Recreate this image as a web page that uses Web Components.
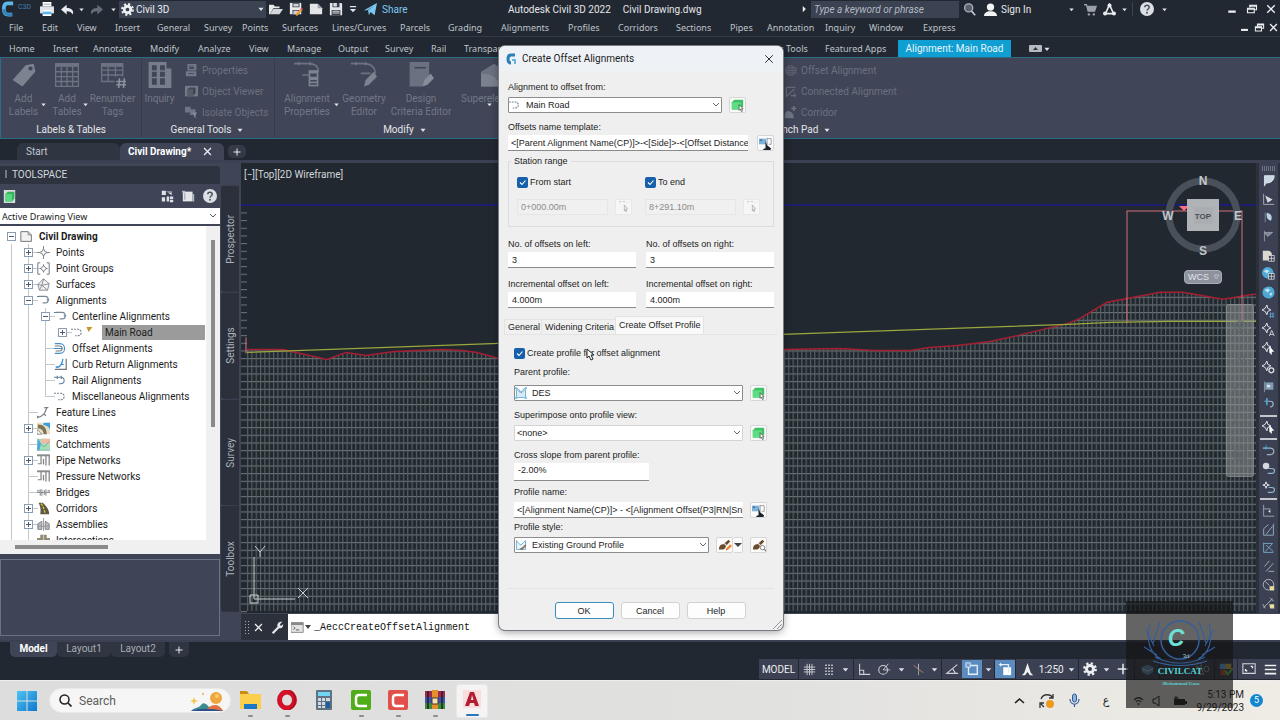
<!DOCTYPE html>
<html lang="en">
<head>
<meta charset="utf-8">
<meta name="viewport" content="width=device-width, initial-scale=1">
<title>Civil Drawing.dwg</title>
<style>
html, body { margin: 0; height: 100%; background: #212830; }
body { font-family: Roboto, "Noto Sans", sans-serif; font-size: 10px; overflow: hidden; }
</style>
</head>
<body>
<civil-app></civil-app>
<script>
/* 16x16 icon shapes, shared by every component */
const ICONS = {
  down: '<path d="M4 6h8l-4 5z" fill="#dfe2e8"/>',
  right: '<path d="M6 3v10l5-5z" fill="#eceef1"/>',
  printer: '<path d="M3 0h10v5H3z" fill="#fff"/><path d="M0 5h16v8H0z" fill="#dfe3e8"/><path d="M3 9h10v7H3z" fill="#fff"/><path d="M3 11h10v3H3z" fill="#5db4e8"/><path d="M4 2h8v1H4z" fill="#999"/>',
  undo: '<path d="M7 2v4c5 0 8 2 8 6l-1 2c-1-3-3-4-7-4v4L0 8z" fill="#e8ebef"/>',
  redo: '<path d="M9 2v4C4 6 1 8 1 12l1 2c1-3 3-4 7-4v4l7-6z" fill="#646b78"/>',
  gear: '<g fill="none" stroke="#edeff2"><circle cx="8" cy="8" r="4" stroke-width="3.4"/><circle cx="8" cy="8" r="6.6" stroke-width="2.6" stroke-dasharray="2.6 2.58"/></g>',
  folder: '<path d="M0 14V3h5l2 2h5v2H5l-4 7z" fill="#e6e8ea"/><path d="M5 8h11l-4 6H1z" fill="#d4d7db"/>',
  saveEdit: '<path d="M1 1h13v13H1z" fill="#e8eaed"/><path d="M4 1h8v5H4zM4 9h8v5H4z" fill="#3b404e"/><path d="M5 2h6v3H5zM5 10h6v4H5z" fill="#cfd3d8"/><path d="M7 14l6-6 2 2-6 6z" fill="#e9a03c"/><path d="M13 8l1-2 2 2-1 2z" fill="#d9534f"/>',
  doc: '<path d="M1 2h9l5 5v7H1z" fill="#e3e5e8"/><path d="M10 2v5h5z" fill="#9aa0aa"/>',
  save: '<path d="M1 1h13l1 1v13H1z" fill="#e3e5e8"/><path d="M4 1h8v5H4zM3 9h10v6H3z" fill="#3b404e"/><path d="M5 1h4v4H5zM4 10h8v1H4zM4 12h8v1H4z" fill="#d9dce0"/>',
  downBar: '<path d="M3 3h10v2H3zM3 8h10l-5 5z" fill="#dfe2e8"/>',
  plane: '<path d="M0 9L16 0l-3 15-5-4-2 4-1-6 8-6-9 6z" fill="#7cc8f2"/>',
  search: '<circle cx="7" cy="6" r="5" fill="#59606e" stroke="#aeb4be" stroke-width="1.6"/><path d="M10.500 10l4.500 5" stroke="#c5cad1" stroke-width="2"/>',
  user: '<circle cx="8" cy="5" r="4.500" fill="#f2f3f5"/><path d="M0 16c0-4 3-6 8-6s8 2 8 6z" fill="#f2f3f5"/>',
  cart: '<path d="M0 2h3l2 8h8l2-6H4" fill="#9aa0aa" stroke="#9aa0aa" stroke-width="1.500"/><circle cx="6" cy="14" r="1.500" fill="#9aa0aa"/><circle cx="12" cy="14" r="1.500" fill="#9aa0aa"/>',
  appA: '<path d="M8 2L3 13h10z" fill="none" stroke="#e9ebee" stroke-width="2"/><circle cx="8" cy="3" r="2.500" fill="#e9ebee"/><circle cx="2.500" cy="13" r="2.500" fill="#e9ebee"/><circle cx="13.500" cy="13" r="2.500" fill="#e9ebee"/>',
  help: '<circle cx="8" cy="8" r="8" fill="#dcdfe3"/><path d="M5.500 6c0-3 5-3 5 0 0 2-2.500 2-2.500 4" fill="none" stroke="#4a505e" stroke-width="1.700"/><circle cx="8" cy="12.300" r="1.100" fill="#4a505e"/>',
  min: '<path d="M3 10h10v3H3z" fill="#eef0f2"/>',
  restore: '<g fill="none" stroke="#eef0f2" stroke-width="1.500"><path d="M5 6V3h9v6h-3"/><path d="M2 7h9v6H2z"/><path d="M5 4h9M2 8h9" stroke-width="2"/></g>',
  close: '<path d="M3 3l10 10M13 3L3 13" stroke="#eef0f2" stroke-width="1.800"/>',
  thinClose: '<path d="M2 2l12 12M14 2L2 14" stroke="#222" stroke-width="1.500"/>',
  tag: '<path d="M1 11L9 2l5-1 1 5-8 9z" fill="#7c8290"/><circle cx="12" cy="4" r="1.300" fill="#404557"/>',
  table: '<g stroke="#6d7382" fill="none" stroke-width=".8"><path d="M1 1h14v14H1zM1 6h14M1 9h14M1 12h14M4.500 3v12M8 3v12M11.500 3v12"/><path d="M1 2h14" stroke-width="2"/></g>',
  renumber: '<g stroke="#6d7382" fill="none" stroke-width=".8"><path d="M9 12H1V1h13v8M1 5h13M1 8h13M5 3v9M9.500 3v6"/><path d="M1 2h13" stroke-width="2"/><path d="M12 10l-.5 6M15 10l-.5 6M10 12h6M10 14h6" stroke="#8a909c" stroke-width="1"/></g>',
  inquiry: '<path d="M1 0h11v4h3v12H1z" fill="#777d8b"/><g fill="#404557"><path d="M3 2h3v3H3zM8 2h3v3H8zM3 6h3v3H3zM8 6h3v3H8zM3 10h3v4H3zM8 10h3v4H8z"/></g>',
  props: '<path d="M3 0h11v8H3zM1 9h13v6H1z" fill="#727886"/><path d="M5 2h6v1H5zM5 4h6v2H5zM4 11h7v1H4z" fill="#404557"/>',
  viewer: '<path d="M0 1h16v13H0z" fill="#747a87"/><path d="M3 5l3-2h7v7l-3 3H3z" fill="#3f4453"/><path d="M3 5h7v8H3z" fill="#565c6a"/>',
  isolate: '<path d="M0 1h7v7H0zM6 4h7v7H6z" fill="#6f7584"/><path d="M9 8h6l-2 3v4l-2-2v-2z" fill="#858b97"/>',
  alProps: '<g fill="none" stroke="#6d7382"><path d="M0 1h9c4 0 6 2 6 5M5 8h4"/><path d="M3 0v2M10 0v2"/></g><path d="M9 5h6v10H9z" fill="#7d8391"/><path d="M10 7h4v2h-4zM10 11h4v1h-4zM10 13h4v1h-4z" fill="#404557"/>',
  geom: '<g fill="none" stroke="#6d7382"><path d="M0 1h8c5 0 7 3 7 6M6 7h6"/><path d="M3 0v2M9 0v2"/></g><path d="M8 15l1-4 5-5 2 3-5 5z" fill="#7d8391"/>',
  design: '<path d="M1 0h12v9l-4 6H1z" fill="#6b7180"/><path d="M4 3h7v1H4z" fill="#404557"/><path d="M9 15l1-4 4-4 2 3-4 4z" fill="#868c98"/>',
  superel: '<path d="M0 6l8-5 8 5v9H0z" fill="#6b7180"/><path d="M0 7c6 0 10 2 12 8H0z" fill="#7b818f"/>',
  mesh: '<g stroke="#636978" fill="none"><circle cx="8" cy="8" r="6"/><path d="M2 5h14M2 8h14M2 11h14M6 2v12M10 2v12"/></g>',
  conn: '<path d="M3 3h11M3 3v11l10-9M8 13h7M13 10v5" stroke="#636978" stroke-width="1.500" fill="none"/>',
  corr: '<path d="M1 15c0-6 1-9 4-9l3 1c3 1 4 4 4 8z" fill="#6d7382"/><path d="M9 3h6M12 0v6" stroke="#6d7382" stroke-width="2"/>',
  cube: '<path d="M1 0h14v16H1z" fill="#d9dcdb"/><path d="M3 5l3-3h8v8l-3 4H3z" fill="#33b35a"/><path d="M3 5h8v9H3z" fill="#57dc83"/>',
  pick: '<path d="M1 4l3-3h11v8l-3 4H1z" fill="#3fbf66"/><path d="M1 4h11v9H1z" fill="#5bdd82"/><path d="M10 7l5 5h-2l1 3-1 .5-1.500-3L10 14z" fill="#fff" stroke="#333" stroke-width=".8"/>',
  pickOff: '<path d="M3 2h2M7 2h3M12 3h1M4 1v2" stroke="#c2c2c2"/><path d="M9 6l4 5h-2l1 3-1 .5-1-3-1 2z" fill="#f2f2f2" stroke="#aaa" stroke-width=".9"/>',
  nameTpl: '<path d="M0 2h9v7H0z" fill="#7fb2d8"/><path d="M10 2h5v7h-3M10 1v9" fill="none" stroke="#8a9096"/><path d="M1 3h3v2H1z" fill="#4a78a0"/><path d="M8 5v9H6l-1 2h9l1-2-5-4z" fill="#1d232b"/>',
  tree: '<path d="M1 1h5v5H1zM1 9h4v5H1zM7 8h3v6H7z" fill="#dfe2e6"/><path d="M8 3h5v3M11 8h4v3h-4zM11 12h4v3h-4z" fill="#dfe2e6"/><path d="M7 2h6v4" stroke="#aab" fill="none"/>',
  panel: '<path d="M1 2h12v12H1z" fill="#e4e6e8"/><path d="M13 5h2v9h-2zM0 1h4v2H0z" fill="#b4b9c1"/><path d="M3 4h1v8H3z" fill="#8a8f99"/>',
  file: '<path d="M1 2h9l4 4v8H1z" fill="#f1f1f1" stroke="#777" stroke-width="1.200"/><path d="M10 2v4h4" fill="none" stroke="#777"/>',
  point: '<g fill="none" stroke="#7c828a" stroke-width="1.200"><path d="M8 0v16M0 8h16"/><path d="M8 3l1.500 3.500L13 8 9.500 9.500 8 13 6.500 9.500 3 8l3.500-1.500z" fill="#fff"/></g>',
  pgroup: '<g fill="none" stroke="#70767e" stroke-width="1.200"><path d="M4 1H1v14h3M12 1h3v14h-3"/><path d="M8 3v10M3 8h10"/><path d="M8 4l1.500 2.500L12 8 9.500 9.500 8 12 6.500 9.500 4 8l2.500-1.500z" fill="#fff"/></g>',
  surface: '<path d="M8 1l7 6-2 8H3L1 8zM8 1l-2 8-5-1M6 9l9-2M6 9l-3 6M6 9l7 6" fill="#f3f3f3" stroke="#82878e" stroke-width="1.100"/>',
  align: '<path d="M2 3h8c5 0 5 8 0 8H7" fill="none" stroke="#7c8590" stroke-width="1.500"/><path d="M0 3h3M12 7h3" stroke="#4f83a8" stroke-width="1.300"/>',
  alignDot: '<path d="M0 4h8c6 0 6 8 0 8H5" fill="none" stroke="#7c8590" stroke-width="1.500" stroke-dasharray="2.500 1.200"/>',
  offset: '<g fill="none" stroke-width="1.300"><path d="M1 2h6c8 0 8 12 0 12H1" stroke="#3f8fcb"/><path d="M1 5h6c4 0 4 6 0 6H2" stroke="#777"/><path d="M0 8h10" stroke="#3f8fcb"/></g>',
  curb: '<path d="M1 14h14V1" fill="none" stroke="#6d767f" stroke-width="1.500"/><path d="M3 12c5-1 7-4 8-11M2 11h4M8 8h4" fill="none" stroke="#2f8fd0" stroke-width="1.500"/>',
  rail: '<path d="M0 4h8c6 0 6 8 0 8H6M4 2v4M9 2v4" fill="none" stroke="#5d7f9c" stroke-width="1.300"/>',
  feature: '<path d="M0 14c7 0 10-4 12-12M9 2h5M1 12v3M9 10l2 2" fill="none" stroke="#777d84" stroke-width="1.500"/>',
  site: '<path d="M0 1h16v14H0z" fill="#e8dfc4"/><path d="M8 1h8v10c0-4-3-7-8-7z" fill="#3aa0da"/><path d="M1 3c7 0 11 4 11 12H8c0-5-3-7-7-7z" fill="#7d7455"/><path d="M0 9l6 6H0z" fill="#fff" stroke="#777"/>',
  catch: '<path d="M0 1h16v14H0z" fill="#a8e0b4"/><path d="M5 1h11v7l-6-2-5 2z" fill="#f2b9a5"/><path d="M1 0l4 7-2 8H0z" fill="#4aa9e0"/><path d="M0 15h16M5 8l4 3 6-7" stroke="#6aa" fill="none"/>',
  pipes: '<path d="M0 2h5v10H1M5 2h6v12M15 2v12M8 6v7M11 2h5" fill="none" stroke="#808283" stroke-width="1.500"/><path d="M0 1h16" stroke="#9a9c9e" stroke-width="1.500"/>',
  bridge: '<path d="M0 8h16M4 4v8M6 4v8M11 4v8M9 5v6M0 6h3M13 6h3" stroke="#8b8f93" stroke-width="1.300"/>',
  corridor: '<path d="M2 1h5c5 4 8 9 8 14H4C5 9 4 5 2 1z" fill="#5c5a45"/><path d="M5 2c3 4 4 8 5 12" stroke="#e9c931" stroke-width="1.600" stroke-dasharray="3 1.500" fill="none"/>',
  assembly: '<path d="M1 14V7l5-3v10zM10 4l5 3v7h-5z" fill="#b9bbbf" stroke="#77797d"/><path d="M8 0v16M1 10h14" stroke="#8a8c90"/>',
  inter: '<path d="M4 1h8v4h4v7H0V5h4z" fill="#8f8c78"/><path d="M8 1v14M0 9h16" stroke="#dcd7b5"/>',
  profile: '<path d="M2 2h2l4 5 4-5h2v12H2z" fill="#d5ecf8" stroke="#5ba8d2" stroke-width="1.100"/><path d="M0 0h3v3H0zM13 0h3v3h-3zM0 13h3v3H0zM13 13h3v3h-3z" fill="#8cc6e4"/><path d="M3 4l5 4 5-4" stroke="#777" fill="none" stroke-dasharray="2 1"/>',
  profEdit: '<path d="M2 2l3 4 3 2 6-6v12H2z" fill="#e7f4fb" stroke="#6aaed0" stroke-width="1.200"/><path d="M6 13l3 2 6-6-1-2-4 4z" fill="#8a6b4a"/>',
  brush: '<path d="M1 13c0-4 2-6 5-6l6-5 2 2-5 5c0 3-3 5-8 4z" fill="#6b4c2a"/><path d="M7 6l3 3" stroke="#ddd" stroke-width="1.500"/>',
  pencil: '<path d="M9 14l1-3 4-4 2 2-4 4z" fill="#ef8b2f"/><path d="M9 14l1-2 1 1z" fill="#d33"/>',
  lens: '<circle cx="12" cy="11" r="2.500" fill="#fff" stroke="#777"/><path d="M14 13l2 2" stroke="#777" stroke-width="1.500"/>',
  sgrid: '<path d="M5 1v14M8 1v14M11 1v14M1 5h14M1 8h14M1 11h14" stroke="#cfd3d9" stroke-width="1.100"/>',
  dots: '<path d="M3 3h11M3 7h11M3 11h11M3 15h11" stroke="#d8dbe0" stroke-width="2" stroke-dasharray="2 2"/>',
  ortho: '<path d="M2 1v13h13M2 9h5v5" fill="none" stroke="#ccd0d6" stroke-width="1.300"/>',
  polar: '<circle cx="7" cy="9" r="5" fill="none" stroke="#ccd0d6" stroke-width="1.200"/><path d="M7 9h8M7 9l6-7" stroke="#ccd0d6"/>',
  iso: '<path d="M8 1v14" stroke="#8ac08b"/><path d="M2 3l12 9" stroke="#c78484"/><path d="M8 1v6" stroke="#bbb"/>',
  angle: '<path d="M14 3L2 13h13M9 8l3 5" fill="none" stroke="#ccd0d6" stroke-width="1.300"/>',
  osnap: '<path d="M4 4h10v10H4z" fill="none" stroke="#e5eef7" stroke-width="1.500"/><path d="M1 1h5v5H1z" fill="#6f9fd0" stroke="#e5eef7"/>',
  lweight: '<path d="M6 6h9v9H6z" fill="#fff"/><path d="M3 3h9v9" fill="none" stroke="#e0eaf4" stroke-width="1.500"/><path d="M3 1v4M1 3h4" stroke="#fff"/>',
  annot: '<path d="M8 0l4 12 3 3-4 0-3-4-3 4H1l3-3z" fill="#f0f1f3"/>',
  plus: '<path d="M8 1v14M1 8h14" stroke="#e9ebee" stroke-width="2"/>',
  layers: '<path d="M8 2l7 3v6l-7 4-7-4V5z" fill="#5e8db4"/><path d="M1 7l7 3 7-3" stroke="#dbe7f0" fill="none"/>',
  shapes: '<path d="M1 1h5v5H1zM3 14l3-6 3 6z" fill="none" stroke="#aab0ba"/><circle cx="12" cy="8" r="3" fill="none" stroke="#aab0ba"/>',
  chip: '<path d="M1 2h7v6H1z" fill="#6ab0e0"/><path d="M8 2h6v6H8z" fill="#d6b53c"/><path d="M2 9h6v6H2z" fill="#c05030"/><path d="M7 10l3 4 6-7" stroke="#59c04a" stroke-width="2.500" fill="none"/>',
  screen: '<path d="M1 2h14v11H1z" fill="none" stroke="#d5d8dd" stroke-width="1.200"/><path d="M4 10v-2M4 10h2M12 5v2M12 5h-2" stroke="#fff" stroke-width="1.500"/>',
  menu: '<path d="M1 3h14M1 8h14M1 13h14" stroke="#f0f1f3" stroke-width="2"/>',
  wrench: '<path d="M1 14l7-7c-1-4 2-7 6-6l-3 3 1 2 3-2c0 4-2 5-5 5l-7 7z" fill="#e4e7ea"/>',
  term: '<path d="M0 2h15v12H0z" fill="#e4e4e4" stroke="#777"/><path d="M0 2h15v3H0z" fill="#8a8a8a"/><path d="M3 7l2 2-2 1.500M6 11h4" stroke="#444" fill="none"/>',
  /* toolbar rail */
  r1: '<path d="M3 15V2h12c0 6-4 9-9 9" fill="#c7d8e4" stroke="#e6eaee"/>',
  r2: '<path d="M2 1v13h13" stroke="#b6bcc6" fill="none"/><path d="M4 3l9 5-6 4z" fill="#d6dade"/>',
  r3: '<path d="M4 2v12" stroke="#8a91a0"/><path d="M6 2c6 1 7 6 5 10C6 11 5 6 6 2z" fill="#b8d4e4"/>',
  r4: '<path d="M3 1v13M3 3h10l-6 5z" fill="#7e8796" stroke="#9ba3b0"/>',
  r5: '<path d="M1 2h8l3 3v9H1z" fill="#dcdad0"/><path d="M8 8h7v7H8zM8 11.500h7M11.500 8v7" fill="#333a49" stroke="#d9dce0"/>',
  globe: '<circle cx="8" cy="8" r="7.500" fill="#4ea9d8"/><path d="M3 5l4-2 3 2-3 3zM9 9l4-1-2 5z" fill="#c8e4f0"/>',
  r6: '<circle cx="7" cy="7" r="7" fill="#4ea9d8"/><path d="M2 5l4-2 3 2-3 3z" fill="#c8e4f0"/><path d="M8 8h7v7H8zM8 11.500h7M11.500 8v7" fill="#333a49" stroke="#d9dce0"/>',
  star: '<path d="M6 0l1 4 4 2-4 2-1 4-2-4-4-2 4-2z" fill="#3b4253" stroke="#e2e5e9" stroke-width="1.200"/>',
  sx: '<path d="M9 11h6M9 14h6M10.500 9v7M13.500 9v7" stroke="#62a3d8"/>',
  sa: '<path d="M9 16l3-7 3 7M10 14h4" stroke="#e2e5e9" fill="none"/>',
  sc: '<path d="M9 5l6 7h-3v4l-3-3z" fill="#fff"/>',
  so: '<circle cx="11.500" cy="11.500" r="3" fill="none" stroke="#e2e5e9" stroke-width="1.500"/>',
  flag: '<path d="M3 2v13" stroke="#9aa2ae"/><path d="M4 3h10v9H4z" fill="#7f9db5"/><path d="M6 6h4v3H6z" fill="#dbe7ee"/>',
  pin: '<path d="M3 4h7c5 0 5 7 0 7" fill="none" stroke="#9fb0c0" stroke-width="1.500"/><path d="M6 0v9" stroke="#4aa8dc" stroke-width="2"/>',
  curve: '<path d="M1 5h9c6 0 6 8 0 8H6" fill="none" stroke="#9fb0c0" stroke-width="1.500"/><path d="M5 1v6M2 5h6" stroke="#4aa8dc"/>',
  curve2: '<circle cx="5" cy="5" r="4" fill="#d5d9dd"/><path d="M8 8h4c5 0 4 6 0 6H7" fill="none" stroke="#8fb2cc" stroke-width="1.500"/>',
  curve3: '<path d="M5 1l1 3 3 1-3 1-1 3-1-3-3-1 3-1z" stroke="#fff" fill="none"/><path d="M8 8h4c5 0 4 6 0 6H7" fill="none" stroke="#8fb2cc" stroke-width="1.500"/>',
  m1: '<path d="M2 1v14h13M2 6h8v5" fill="none" stroke="#a9b2bf"/><circle cx="9" cy="9" r="1" fill="#fff"/>',
  m2: '<path d="M2 7v8h12V1M2 7l6-5M5 14l8-10" fill="none" stroke="#9dbcd2"/>',
  m3: '<path d="M2 2v12h12M2 3h11L4 13M5 5l9 8" fill="none" stroke="#7fb4d4"/>',
  m4: '<path d="M3 8l6-7M5 14l9-10M8 14h7" fill="none" stroke="#b5bdc8"/>',
  m5: '<circle cx="8" cy="7" r="6.500" fill="none" stroke="#c6ccd3"/><path d="M4 3l5 5" stroke="#c6ccd3"/><path d="M9 9h6v5h-5z" fill="#e8dca0"/>',
  m6: '<path d="M2 13L13 2M1 9l3 5M10 1l4 4" stroke="#c6ccd3"/><path d="M9 9h6v5h-5z" fill="#e8dca0"/>'
};
const ic = (names, size = 12, extra = '') =>
  `<svg width="${size}" height="${size}" viewBox="0 0 16 16" aria-hidden="true" ${extra}>${names.split('+').map(n => ICONS[n]).join('')}</svg>`;

const BASE = `*{box-sizing:border-box} svg{display:block;flex:none}
button{font:inherit;color:inherit;background:none;border:0;padding:0;margin:0;display:flex;align-items:center;justify-content:center}
a{color:inherit;text-decoration:none}`;

function define(name, css, html) {
  const tpl = document.createElement('template');
  tpl.innerHTML = `<style>${BASE}${css}</style>${html}`;
  customElements.define(name, class extends HTMLElement {
    constructor() {
      super();
      this.attachShadow({ mode: 'open' }).append(tpl.content.cloneNode(true));
    }
  });
}

/* a toolbar cell: [width, icon, size, label] */
const cells = list => list.map(([w, n, s, label = n]) =>
  n ? `<button style="width:${w}px" aria-label="${label}">${ic(n, s)}</button>` : `<span style="width:${w}px"></span>`).join('');

define('title-bar', `
:host{display:flex;align-items:center;height:18px;background:#222831;color:#e4e6ea}
.left{display:flex;align-items:center;width:508px;height:18px}
.brand{display:flex;align-items:flex-start;gap:3px;width:38px;padding-left:2px;height:16px}
.brand small{font-size:7px;color:#3f7fb5;line-height:12px}
.ws{position:relative;display:flex;align-items:center;width:147px;height:17px;background:#3b4252;padding-left:2px}
.ws select{appearance:none;border:0;background:none;color:#eceef1;font:10px Roboto,sans-serif;width:130px;padding:0 0 0 2px;outline:0}
.share{color:#7cc8f2;padding-left:2px}
.titles{display:flex;gap:12px;flex:1}
input{width:148px;height:17px;border:0;background:#3b4252;font:italic 10px Roboto,sans-serif;padding:0 0 0 3px}
input::placeholder{color:#b4b9c3}
.user{width:60px;display:flex}
.bar{width:1px;height:14px;background:#3b4252}`,
`<div class="left"><div class="brand"><svg width="13" height="16" viewBox="0 0 14 16"><path d="M12 2H6C3 2 2 4 2 8s1 6 5 6h4" fill="none" stroke="#5db5ea" stroke-width="4"/><path d="M2 8c0 4 1 6 5 6h4" fill="none" stroke="#3183bd" stroke-width="3"/></svg><small>C3D</small></div>
${cells([[18,'printer',14],[22,'undo',13],[6,'down',9],[24,'redo',13],[11,'down',9]])}
<div class="ws">${ic('gear',13)}<select aria-label="Workspace"><option>Civil 3D</option></select>${ic('down',10)}</div>
${cells([[20,'folder',14],[20,'saveEdit',14],[20,'doc',14],[20,'save',14],[14,'downBar',10],[20,'plane',13]])}<a class="share" href="#">Share</a></div>
<div class="titles"><span>Autodesk Civil 3D 2022</span><span>Civil Drawing.dwg</span></div>
${cells([[14,'right',10]])}<input aria-label="Search help" placeholder="Type a keyword or phrase">
${cells([[20,'search',13],[22,'user',13]])}<a class="user" href="#">Sign In</a>
${cells([[20,'down',9],[18,'cart',13],[20,'appA',13],[10,'down',9],[3,'']])}<i class="bar"></i>${cells([[28,'help',14],[6,'down',9],[54,''],[21,'min',12],[20,'restore',12],[18,'close',12]])}`);

define('menu-bar', `
:host{display:flex;align-items:center;justify-content:space-between;height:19px;background:#222831;border-bottom:1px solid #333a45;color:#bfc3ca;font-family:"Noto Sans",sans-serif;font-size:9px;padding-left:9px}
nav{display:grid;grid-template-columns:33px 35px 38px 42px 47px 38px 40px 50px 68px 48px 53px 67px 50px 58px 54px 37px 58px 44px 54px 40px;line-height:19px}
.win{display:flex}`,
`<nav>${'File,Edit,View,Insert,General,Survey,Points,Surfaces,Lines/Curves,Parcels,Grading,Alignments,Profiles,Corridors,Sections,Pipes,Annotation,Inquiry,Window,Express'.split(',').map(t => `<a href="#">${t}</a>`).join('')}</nav>
<div class="win">${cells([[15,'min',11],[15,'restore',11],[13,'close',11]])}</div>`);

define('ribbon-tabs', `
:host{display:flex;align-items:flex-end;height:20px;background:#222831;color:#bfc3ca;font-family:"Noto Sans",sans-serif;font-size:9px;padding-left:9px}
nav{display:grid;grid-template-columns:44px 40px 57px 48px 51px 38px 51px 47px 46px 33px 68px 64px 67px 39px 49px 74px 73px;line-height:17px}
nav a{white-space:nowrap}
.on{background:#109fd2;color:#e8f6fc;line-height:17px;width:113px;text-align:center;font-family:Roboto,sans-serif;font-size:10px}
.state{display:flex;align-items:center;height:17px;padding-left:18px}
.state i{width:13px;height:7px;background:#b4b8c0;border-radius:1px;display:flex;align-items:center;justify-content:center}`,
`<nav>${'Home,Insert,Annotate,Modify,Analyze,View,Manage,Output,Survey,Rail,Transparent,InfraWorks,Collaborate,Help,Add-ins,Express Tools,Featured Apps'.split(',').map(t => `<a href="#">${t}</a>`).join('')}</nav>
<a class="on" href="#">Alignment: Main Road</a><div class="state"><i><svg width="5" height="3" viewBox="0 0 5 3"><path d="M0 3h5L2.500 0z" fill="#333"/></svg></i>${ic('down',10)}</div>`);

define('ribbon-panel', `
:host{display:flex;flex-direction:column;border-right:1px solid #363b49}
.body{flex:1;display:flex;min-width:0}
footer{height:15px;line-height:14px;display:flex;justify-content:center;color:#e4e6ea;white-space:nowrap}
:host([start]) footer{justify-content:flex-start}
:host([plain]){border-right:0}`,
`<div class="body"><slot></slot></div><footer><slot name="title"></slot></footer>`);

define('ribbon-tool', `
:host{display:block;position:relative;color:#727888;text-align:center;line-height:13px;padding-top:4px}
button{display:flex;flex-direction:column;width:100%;gap:4px;line-height:13px}
.arrow{position:absolute;right:-2px;top:42px}
:host([mid]) .arrow{right:50%}`,
`<button><slot name="icon"></slot><span><slot></slot></span></button><span class="arrow"><slot name="arrow"></slot></span>`);

define('ribbon-list', `
:host{display:grid;grid-auto-rows:21px;align-content:start;color:#6b7180;padding:2px 0 0 8px}
::slotted(a){display:flex;align-items:center;gap:4px;color:inherit;text-decoration:none}`, `<slot></slot>`);

const tool = (w, icon, a, b, arrow) => `<ribbon-tool ${arrow === 'mid' ? 'mid' : ''} style="width:${w}px">${ic(icon, 26, 'slot="icon"')}${a}<br>${b || '&nbsp;'}${arrow ? ic('down', 9, 'slot="arrow"') : ''}</ribbon-tool>`;
const row = (icon, t) => `<a href="#">${ic(icon, 13)}<span>${t}</span></a>`;
define('app-ribbon', `
:host{display:grid;grid-template-columns:141px 133px 262px 229px 1fr;height:82px;background:#404557;border:1px solid #2c6a86;border-right:0}
a{display:flex;align-items:center;gap:4px;white-space:nowrap}
.sub svg{display:inline;vertical-align:middle;margin-left:4px}
.f{padding-left:18px}`,
`<ribbon-panel>${tool(45,'tag','Add','Labels',1)}${tool(42,'table','Add','Tables',1)}${tool(49,'renumber','Renumber','Tags')}<span slot="title">Labels &amp; Tables</span></ribbon-panel>
<ribbon-panel>${tool(35,'inquiry','Inquiry','')}<ribbon-list>${row('props','Properties')}${row('viewer','Object Viewer')}${row('isolate','Isolate Objects')}</ribbon-list><span slot="title" class="sub">General Tools${ic('down',10)}</span></ribbon-panel>
<ribbon-panel>${tool(64,'alProps','Alignment','Properties',1)}${tool(50,'geom','Geometry','Editor')}${tool(64,'design','Design','Criteria Editor')}${tool(82,'superel','Superelevation','','mid')}<span slot="title" class="sub">Modify${ic('down',10)}</span></ribbon-panel>
<ribbon-panel></ribbon-panel>
<ribbon-panel plain start><ribbon-list class="f">${row('mesh','Offset Alignment')}${row('conn','Connected Alignment')}${row('corr','Corridor')}</ribbon-list><span slot="title" class="sub">Launch Pad${ic('down',10)}</span></ribbon-panel>`);

define('doc-tabs', `
:host{display:flex;align-items:flex-end;height:24px;background:#222831;border-bottom:3px solid #3b4152;padding-left:17px;color:#c3c7ce}
a{display:flex;align-items:center;height:17px;background:#2f3541;border-radius:6px 6px 0 0;width:103px;padding-left:9px}
.on{background:#3f4556;color:#fff;font-weight:bold;width:104px;padding-left:8px;gap:11px}
button{background:#343a47;height:13px;width:18px;border-radius:5px;margin:0 0 2px 4px}`,
`<a href="#">Start</a><a class="on" href="#">Civil Drawing*${ic('close',11)}</a><button aria-label="New tab">${ic('plus',8)}</button>`);

/* [level, expander, icon, label] */
const TREE = [[0,'-','file','Civil Drawing'],[1,'+','point','Points'],[1,'+','pgroup','Point Groups'],[1,'+','surface','Surfaces'],[1,'-','align','Alignments'],
[2,'-','align','Centerline Alignments'],[3,'+','alignDot','Main Road'],[2,'','offset','Offset Alignments'],[2,'','curb','Curb Return Alignments'],[2,'','rail','Rail Alignments'],
[2,'','alignDot','Miscellaneous Alignments'],[1,'','feature','Feature Lines'],[1,'+','site','Sites'],[1,'','catch','Catchments'],[1,'+','pipes','Pipe Networks'],[1,'','pipes','Pressure Networks'],
[1,'','bridge','Bridges'],[1,'+','corridor','Corridors'],[1,'+','assembly','Assemblies'],[1,'','inter','Intersections']];
const treeRow = ([lv, ex, icon, label]) => {
  const guides = [];
  for (let k = lv ? 0 : 1; k <= Math.min(lv, 2); k++) guides.push(`linear-gradient(#c4c6c9,#c4c6c9) ${11 + 17 * k}px 0/1px ${label[0] === 'M' && lv === 2 && k === 2 ? '8px' : '16px'} no-repeat`);
  if (lv) guides.push(`linear-gradient(#c4c6c9,#c4c6c9) ${11 + 17 * lv}px 8px/10px 1px no-repeat`);
  return `<li class="l${lv}" style="padding-left:${7 + 17 * lv}px;background:${guides.join(',') || 'none'}">
<i class="ex ${ex ? 'box' : ''}">${ex ? `<svg width="7" height="7" viewBox="0 0 7 7"><path d="M1 3.500h5${ex === '+' ? 'M3.500 1v5' : ''}" stroke="#4c5a78"/></svg>` : ''}</i>${ic(icon, 13)}${lv === 3 ? '<svg width="13" height="10" viewBox="0 0 12 10"><path d="M2 0h6L4 5z" fill="#c8952c"/></svg>' : ''}<span>${label}</span></li>`;
};
define('tree-view', `
:host{display:grid;grid-template-columns:1fr 14px;grid-template-rows:1fr 14px;background:#fff;min-height:0;overflow:hidden}
ul{list-style:none;margin:0;padding:2px 0 0;min-height:0;overflow:hidden;color:#1c1c1c}
li{display:flex;align-items:center;height:16px;white-space:nowrap}
.ex{width:9px;height:9px;margin-right:4px;flex:none}
.box{border:1px solid #8b9bb0;background:#fff;display:block}
li span{padding-left:6px}
.l2 span{padding-left:5px}
.l0 span{font-weight:bold}
.l3 span{background:#9b9b9b;width:103px;line-height:15px;padding-left:3px;margin-left:5px}
.v{background:#f0f0f0;padding:14px 5px 0 5px}
.v i{display:block;height:187px;background:#8a8a8a}
.h{grid-column:1/3;background:#f0f0f0;padding:5px 0 5px 15px}
.h i{display:block;height:4px;width:93px;background:#8a8a8a}`,
`<ul>${TREE.map(treeRow).join('')}</ul><div class="v"><i></i></div><div class="h"><i></i></div>`);

define('tool-space', `
:host{display:flex;flex-direction:column;width:221px;background:#3f4556;min-height:0;padding:3px 1px 4px 0}
header{height:18px;background:#2d333f;color:#d5d8dd;display:flex;align-items:center;gap:5px;padding:0 0 2px 5px;border-radius:0 3px 0 0}
header i{width:2px;height:8px;background:#70788a}
.bar{display:flex;align-items:center;justify-content:space-between;height:24px;padding:0 0 0 3px}
.bar div{display:flex}
.sel{position:relative}
select{display:block;appearance:none;width:100%;height:16px;border:0;border-radius:0;background:#fff;color:#1a1a1a;font:9px "Noto Sans",sans-serif;padding:0 0 0 2px;outline:0}
.sel svg{position:absolute;right:3px;top:4px}
tree-view{flex:1;margin-top:2px}
.log{height:77px;margin-top:5px;border:1px solid #6a7285}`,
`<header><i></i>TOOLSPACE</header><div class="bar">${ic('cube',13)}<div>${cells([[21,'tree',13],[21,'panel',13],[21,'help',14]])}</div></div>
<div class="sel"><select aria-label="View"><option>Active Drawing View</option></select><svg width="8" height="8" viewBox="0 0 8 8"><path d="M1 2l3 3 3-3" fill="none" stroke="#555"/></svg></div>
<tree-view></tree-view><div class="log"></div>`);

define('side-tabs', `
:host{display:grid;grid-template-rows:repeat(4,1fr);width:20px;background:#3f4556;padding:22px 2px 28px 0;color:#aeb3bd}
a{writing-mode:vertical-rl;transform:rotate(180deg);display:flex;align-items:center;justify-content:center;background:#2b303b;border-radius:0 3px 3px 0;border-bottom:1px solid #3f4556}
a:first-child{background:#3f4556;color:#dfe1e5;border:1px solid #343a48;border-right:0}`,
`<a href="#">Prospector</a><a href="#">Settings</a><a href="#">Survey</a><a href="#">Toolbox</a>`);

const ground = '6,186 42,186 64,191 86,196 105,189 125,192 153,188 200,186 222,187 236,189 258,195 400,190 541,186 599,185 633,187 669,187 688,184 716,182 749,178 777,172 827,160 839,155 866,139 919,129 942,129 982,136 1012,131 1015,131';
define('drawing-view', `
:host{display:block;position:relative;background:#212830;min-width:0;overflow:hidden}
.plan{position:absolute;inset:0;width:100%;height:100%}
.view{position:absolute;left:3px;top:5px;color:#d4d7db;line-height:14px}
.ucs{position:absolute;left:7px;bottom:2px}
.cube{position:absolute;right:11px;top:8px;width:84px;height:88px}
.wcs{position:absolute;right:34px;top:107px;width:38px;height:14px;border-radius:4px;background:#8d929d;border:1px solid #a9adb6;color:#e3e5e9;font:9px/12px "Liberation Sans",sans-serif;justify-content:flex-start;padding-left:3px;gap:4px}
.nav{position:absolute;right:2px;top:141px;width:28px;height:173px;background:rgba(150,154,154,.5);border:1px solid rgba(150,154,154,.5);border-radius:3px;display:flex;flex-direction:column;align-items:center;justify-content:space-around;padding:6px 0}`,
`<svg class="plan" viewBox="0 0 1015 449" preserveAspectRatio="none">
<defs><pattern id="v" width="4.330" height="7.650" patternUnits="userSpaceOnUse" x="6" y="187"><path d="M0 .5h4.330" stroke="#6c7677" stroke-width="1.200"/><path d="M.5 0v7.650" stroke="#566062" stroke-width="1.300"/></pattern>
<pattern id="t" width="8" height="7.650" patternUnits="userSpaceOnUse" y="187"><path d="M0 .5h6" stroke="#667071" stroke-width="1.200"/></pattern></defs>
<path d="M0 42h1015" stroke="#1a1a86" stroke-width="1.500"/><rect x="0" y="47" width="6" height="402" fill="url(#t)"/>
<polygon points="${ground} 1015,447 6,447" fill="url(#v)"/><path d="M5 174v16" stroke="#e8707c"/>
<polyline points="${ground}" fill="none" stroke="#a51f33" stroke-width="1.500"/>
<polyline points="6,189 258,180 541,171 827,161 870,159 930,158 1015,158" fill="none" stroke="#9aa83c" stroke-width="1.300"/>
<path d="M886 160V48h115v110" fill="none" stroke="#d5717c"/><path d="M938 43h10l-5 5z" fill="#ff6f7f"/></svg>
<div class="view">[−][Top][2D Wireframe]</div>
<svg class="ucs" width="64" height="66" viewBox="0 0 64 66"><g fill="none" stroke="#c9cdd1"><path d="M6 54V12M6 54h41"/><path d="M2 50h8v8H2z"/><path d="M7 1l5 6 5-6M12 7v5M50 43l10 10M60 43L50 53"/></g></svg>
<svg class="cube" viewBox="0 0 84 88" font-family="Liberation Sans, sans-serif" font-weight="bold" text-anchor="middle"><circle cx="42" cy="44" r="34" fill="none" stroke="#4a505a" stroke-width="7"/><rect x="26" y="28" width="32" height="32" fill="#b8bbbe" opacity=".95"/><rect x="33" y="36" width="19" height="17" fill="#aaadb1"/><text x="42" y="48" font-size="8" fill="#4a4f57">TOP</text><g fill="#c3c6ca" font-size="12"><text x="42" y="14">N</text><text x="7" y="49">W</text><text x="77" y="49">E</text><text x="42" y="84">S</text></g></svg>
<button class="wcs">WCS<svg width="7" height="6" viewBox="0 0 7 6"><path d="M1 1h5L3.500 5z" fill="none" stroke="#b9bdc5"/></svg></button>
<div class="nav">${['<circle cx="8" cy="8" r="6"/><circle cx="8" cy="8" r="2"/>','<path d="M4 14V6l4 3V3l4 4v7z"/>','<circle cx="7" cy="7" r="5"/><path d="M11 11l4 4"/>','<path d="M1 8h14M4 4L1 8l3 4M12 4l3 4-3 4"/>','<path d="M2 3h12v9H2zM5 14h6M6 6l4 2-4 2z"/>'].map(p => `<svg width="15" height="15" viewBox="0 0 16 16" fill="none" stroke="#5d6467">${p}</svg>`).join('')}</div>`);

define('icon-rail', `
:host{display:flex;flex-direction:column;width:24px;background:#3b4152;border-left:3px solid #2b303b;border-right:2px solid #2b303b;padding-top:3px;min-height:0}
.grip{height:5px;margin:0 3px;background:repeating-linear-gradient(90deg,#6d7484 0 1px,transparent 1px 2px)}
button{flex:1;min-height:0}
hr{width:17px;height:2px;margin:1px auto;border:0;background:#c3c7cd}`,
`<div class="grip"></div>${['r1','r2','r3','r4','r5','r6','globe','star+sx','star+sa','star+sc','star+so','flag','pin','-','star+sc','-','curve','curve2','curve3','-','m1','m2','m3','m4','m5','m6'].map(n => n === '-' ? '<hr>' : `<button aria-label="${n}">${ic(n, 13)}</button>`).join('')}`);

define('command-line', `
:host{display:flex;align-items:center;height:27px;background:#2b303b;border-top:1px solid #3f4556}
.grip{width:6px;height:15px;margin:0 0 0 3px;background:radial-gradient(#aab 40%,transparent 45%) 0 0/3px 3px}
.box{flex:1;display:flex;align-items:center;height:26px;background:#fff;padding-left:3px}
input{flex:1;height:24px;border:0;outline:0;font:10px/22px "Liberation Mono","DejaVu Sans Mono",monospace;color:#111;padding:0 0 0 2px;background:none}`,
`<i class="grip"></i>${cells([[16,'close',11],[22,'wrench',13]])}<div class="box">${ic('term',13)}<svg width="8" height="8" viewBox="0 0 8 8"><path d="M1 2h6L4 6z" fill="#444"/></svg><input aria-label="Command" value="_AeccCreateOffsetAlignment"></div>`);

define('layout-tabs', `
:host{display:flex;height:19px;background:#222831;border-top:2px solid #3b4152;padding-left:10px;color:#a9adb6}
a{height:15px;line-height:14px;background:#2f3541;border-radius:0 0 5px 5px;width:54px;text-align:center}
.on{background:#3f4556;color:#fff;font-weight:bold;width:47px}
button{background:#2f3541;height:15px;width:20px;margin-left:4px;border-radius:0 0 5px 5px}`,
`<a class="on" href="#">Model</a><a href="#">Layout1</a><a href="#">Layout2</a><button aria-label="New layout">${ic('plus',8)}</button>`);

define('status-bar', `
:host{display:flex;justify-content:flex-end;height:21px;background:#222831;padding-bottom:1px;color:#eceef1}
div{display:flex;background:#3b4152;margin-left:1px}
button{height:20px}
.hl button{background:#5b8cc0;margin:1px 0 0;height:18px}`,
`<div><button style="width:39px">MODEL</button></div><div>${cells([[20,'sgrid',13],[19,'dots',12],[15,'down',11]])}</div>
<div>${cells([[20,'ortho',13],[19,'polar',14],[16,'down',11],[18,'iso',13],[14,'down',11]])}</div><div>${cells([[20,'angle',14]])}<span class="hl">${cells([[20,'osnap',14]])}</span>${cells([[12,'down',11]])}</div>
<div class="hl">${cells([[20,'lweight',14]])}</div><div>${cells([[22,'annot',13]])}<button style="width:40px">1:250&nbsp;${ic('down',11)}</button></div>
<div>${cells([[21,'gear',14],[12,'down',11]])}${cells([[22,'plus',12]])}</div><div>${cells([[24,'layers',13]])}</div><div>${cells([[32,''],[22,'shapes',14]])}</div><div>${cells([[22,'chip',14]])}</div><div>${cells([[22,'screen',14],[20,'menu',13]])}</div>`);

define('task-app', `
:host{display:flex;flex-direction:column;align-items:center;justify-content:flex-end;width:32px;height:34px;margin-right:5px;gap:3px;padding-bottom:1px;border-radius:3px}
:host([active]){background:#f5f3f3;border:1px solid #ebe8e8}
i{width:5px;height:2px;border-radius:1px;background:#8d8d8d}
:host([active]) i{width:13px;background:#2678b8}
:host([idle]) i{background:none}
button{height:24px}`, `<button><slot></slot></button><i></i>`);

define('task-bar', `
:host{display:flex;align-items:center;height:40px;background:linear-gradient(90deg,#dddddd,#e1e1e0 60%,#efece5);border-top:1px solid #eee;color:#1f1f1f}
.start{margin-left:17px}
.search{display:flex;align-items:center;width:182px;height:25px;margin:0 3px 0 12px;border-radius:13px;background:#f6f6f6;padding:0 6px 0 9px;border:1px solid #e9e9e9}
.search input{border:0;background:none;outline:0;font:12px Roboto,sans-serif;width:0;flex:1;padding:0 0 0 7px}
.search input::placeholder{color:#5c5c5c}
.sp{flex:1}
.ar{width:22px;text-align:center;font:11px "DejaVu Sans",sans-serif;margin-right:9px}
.clock{text-align:right;line-height:13px;width:54px}
.badge{width:13px;height:13px;border-radius:7px;background:#1287cf;color:#fff;font-size:9px;line-height:13px;text-align:center;margin:0 17px 0 6px}`,
`<button class="start" aria-label="Start"><svg width="20" height="20" viewBox="0 0 20 20"><defs><linearGradient id="w" x2="1" y2="1"><stop stop-color="#4cc4f0"/><stop offset="1" stop-color="#0f77cf"/></linearGradient></defs><path d="M0 0h9.500v9.500H0zM10.500 0H20v9.500h-9.500zM0 10.500h9.500V20H0zM10.500 10.500H20V20h-9.500z" fill="url(#w)"/></svg></button>
<label class="search"><svg width="13" height="13" viewBox="0 0 13 13"><circle cx="5.500" cy="5.500" r="4.500" fill="none" stroke="#222" stroke-width="1.500"/><path d="M9 9l3.500 3.500" stroke="#222" stroke-width="1.700"/></svg><input aria-label="Search" placeholder="Search">
<svg width="34" height="22" viewBox="0 0 34 22"><circle cx="26" cy="8" r="6" fill="#f0a63e"/><circle cx="27" cy="6" r="2" fill="#f9cd6c"/><path d="M4 7l1 3 3 1-3 1-1 3-1-3-3-1 3-1z" fill="#f5c341"/><circle cx="13" cy="4" r="1" fill="#f0a63e"/><path d="M1 21c4-4 8-3 10-6 3-4 6 0 8 2 4 0 9-3 14 4z" fill="#3c8c94"/><path d="M17 19c5-5 12-6 16 2z" fill="#e2723f"/><path d="M1 21c8-3 20-3 32 0z" fill="#2f4f88"/></svg></label>
<task-app aria-label="Files"><svg width="21" height="20" viewBox="0 0 21 20"><path d="M0 1h7l2 3H0z" fill="#c98d14"/><path d="M0 4h21v15H0z" fill="#fbcf4c"/><path d="M4 19v-5h13v5z" fill="#1b78c7"/></svg></task-app>
<task-app><svg width="20" height="20" viewBox="0 0 20 20"><ellipse cx="10" cy="10" rx="7.500" ry="8" fill="none" stroke="#d3122a" stroke-width="5"/><path d="M13 1c7 4 7 14 0 18" stroke="#a70e25" stroke-width="1.500" fill="none"/></svg></task-app>
<task-app idle><svg width="16" height="20" viewBox="0 0 16 20"><rect width="16" height="20" rx="1" fill="#5f7182"/><path d="M2 2h12v4H2z" fill="#6fd7f4"/><path d="M2 8h3v3H2zM6 8h3v3H6zM10 8h4v3h-4zM2 12h3v3H2zM6 12h3v3H6zM2 16h3v2H2zM6 16h3v2H6z" fill="#cfd8e0"/><path d="M10 12h4v6h-4z" fill="#1f5e98"/></svg></task-app>
<task-app><svg width="20" height="20" viewBox="0 0 20 20"><rect width="20" height="20" rx="2" fill="#4fae17"/><path d="M16 5H8Q5 5 5 8v5q0 3 3 3h8" fill="none" stroke="#fff" stroke-width="2.500"/></svg></task-app>
<task-app><svg width="20" height="20" viewBox="0 0 20 20"><rect width="20" height="20" rx="2" fill="#e2504b"/><path d="M16 5H8Q5 5 5 8v5q0 3 3 3h8" fill="none" stroke="#fff" stroke-width="2.500"/></svg></task-app>
<task-app><svg width="20" height="20" viewBox="0 0 20 20"><path d="M0 1h20v6H0z" fill="#a3264f"/><path d="M0 7h20v6H0z" fill="#3b53a8"/><path d="M0 13h20v6H0z" fill="#3f8b3c"/><path d="M3 1v18M17 1v18" stroke="#222" stroke-width="1.500"/><path d="M7 0h6v19H7z" fill="#e2902c"/><path d="M7 8h6v6H7z" fill="#f4e2b2" stroke="#533"/></svg></task-app>
<task-app active><svg width="18" height="20" viewBox="0 0 18 20"><path d="M0 1h18v18H0z" fill="#f8dedd"/><path d="M2 17L7 3h4l5 14h-4l-1-3H7l-1 3zM8 11h2.500L9 6z" fill="#b11e31" fill-rule="evenodd"/></svg></task-app>
<span class="sp"></span>
<svg width="11" height="8" viewBox="0 0 11 8"><path d="M1 6l4.500-4L10 6" fill="none" stroke="#222" stroke-width="1.600"/></svg>
<svg style="margin:0 0 0 14px" width="16" height="16" viewBox="0 0 16 16"><path d="M2 6c2-6 10-5 12-1M14 1v4h-4M1 15v-5h4M2 11l3 3" fill="none" stroke="#333" stroke-width="1.300"/><circle cx="11" cy="11" r="4" fill="#ee9a1f"/></svg>
<svg style="margin:0 15px 0 14px" width="11" height="15" viewBox="0 0 11 15"><rect x="3.500" y="1" width="4" height="8" rx="2" fill="#8fb3dd" stroke="#2f5b9c"/><path d="M1 6c0 7 9 7 9 0M5.500 11v3" fill="none" stroke="#2f5b9c" stroke-width="1.200"/></svg>
<span class="ar">ع</span>
<svg style="margin:0 8px 0 7px" width="11" height="9" viewBox="0 0 11 9"><path d="M1 4c3-3 6-3 9 0M3 6c2-2 3-2 5 0" fill="none" stroke="#333" stroke-width="1.200"/><circle cx="5.500" cy="8" r="1" fill="#333"/></svg>
<svg width="10" height="10" viewBox="0 0 10 10"><path d="M1 3h2l4-3v10L3 7H1z" fill="none" stroke="#222"/></svg>
<svg style="margin:0 3px 0 11px" width="14" height="10" viewBox="0 0 14 10"><path d="M1 3h11v6H1zM12 5h2v3h-2z" fill="#222"/><path d="M3 0v4M1 2h5" stroke="#222"/></svg>
<div class="clock"><div>5:13 PM</div><div>9/29/2023</div></div><div class="badge">5</div>`);

/* ---- dialog ---- */
define('field-box', `
:host{display:block;--gap:4px}
:host([tight]){--gap:2px}
:host([loose]){--gap:7px}
.lab{height:12px;line-height:12px;margin-bottom:var(--gap);white-space:nowrap}
.row{display:flex;align-items:center}`,
`<div class="lab"><slot name="label"></slot></div><div class="row"><slot></slot></div>`);

const chev = '<svg class="c" width="8" height="8" viewBox="0 0 8 8"><path d="M1 2l3 3 3-3" fill="none" stroke="#666"/></svg>';
const check = (text) => `<label class="ck"><span class="tick"><input type="checkbox" checked><svg width="11" height="11" viewBox="0 0 11 11"><path d="M3 5.500l2 2 3.500-4" fill="none" stroke="#fff" stroke-width="1.100"/></svg></span>${text}</label>`;
define('offset-dialog', `
:host{position:absolute;left:calc(50% - 141px);top:46px;width:284px;background:#efefef;border-radius:6px;box-shadow:0 0 0 1px #777c84,0 2px 8px rgba(0,0,0,.4);color:#1c1c1c;font-family:"Liberation Sans",sans-serif;font-size:9px;padding-bottom:11px}
header{display:flex;align-items:center;height:25px;background:#eef2f6;border-radius:6px 6px 0 0;padding:0 9px 0 7px;font:10px Roboto,sans-serif}
header span{flex:1;padding-left:4px}
main{padding:10px 9px 0;display:flex;flex-direction:column}
label{display:block}
input,select{font:inherit;color:#1c1c1c;margin:0;outline:0}
input[type=text]{width:100%;min-width:0;height:16px;border:0;border-bottom:1px solid #8a8a8a;background:#fff;padding:0 0 0 4px}
input[type=text].long{padding-left:3px}
.sel{position:relative;flex:1}
select{appearance:none;display:block;width:100%;height:16px;border:1px solid #8c8c8c;border-radius:1px;background:#fff;padding:0 0 0 17px}
.light select{border-color:#d3d3d3;padding-left:2px}
.sel svg{position:absolute;top:2px}
.sel .i{left:1px}
.sel .c{right:2px;top:4px}
.sq{width:17px;height:16px;background:#fbfbfb;border:1px solid #d6d6d6;border-radius:2px;margin-left:7px;flex:none}
.off{border-color:#e8e8e8;background:#f6f6f6}
.tpl{margin-top:8px}
.tpl .sq{margin-left:9px}
fieldset{display:block;margin:4px 0 0;padding:0;border:0;position:relative;min-width:0}
legend{position:absolute;left:3px;top:0;background:#efefef;padding:0 3px;line-height:12px;z-index:1}
.range{display:grid;grid-template-columns:128px 1fr;grid-template-rows:28px 21px;margin-top:6px;height:66px;padding:6px 8px 0;border:1px solid #dcdcdc}
.ck{display:flex;align-items:center;gap:2px}
.tick{position:relative;width:11px;height:11px;flex:none}
.tick input{appearance:none;display:block;width:11px;height:11px;border-radius:2px;background:#1660ab}
.tick svg{position:absolute;left:0;top:0}
.st{display:flex;align-items:center}
.st input[type=text]{width:91px;color:#8c8c8c;background:#f0f0f0;border:1px solid #e6e6e6;padding-left:3px}
.two{display:grid;grid-template-columns:1fr 1fr;column-gap:10px;margin-top:10px}
fieldset+.two{margin-top:11px}
nav{display:flex;align-items:flex-end;height:18px;margin:9px -3px 0 -4px;border-bottom:1px solid #e3e3e3}
nav button{height:15px;padding:0 1px 0 3px;border:1px solid #e3e3e3;border-width:1px 0 0 1px;background:#f0f0f0}
nav .on{height:18px;background:#f9f9f9;padding:0 3px 1px;border-right-width:1px}
.page{padding:12px 7px 35px 6px;border-bottom:1px solid #e3e3e3;display:flex;flex-direction:column}
.page .ck{height:12px;margin-bottom:7px}
.g8{margin-top:8px}.g5{margin-top:5px}.g3{margin-top:3px}
input[type=text].slope{height:18px;width:135px;padding-bottom:3px}
.dd{width:10px;margin-left:0;border-left:0}
footer{display:flex;justify-content:center;gap:7px;padding:13px 0 0 18px}
footer button{width:59px;height:17px;background:#fdfdfd;border:1px solid #d2d2d2;border-radius:3px}
footer .def{border-color:#3b8cbf}
.grab{position:absolute;right:1px;bottom:1px}
.cursor{position:absolute;left:87px;top:302px}`,
`<header><svg width="12" height="12" viewBox="0 0 12 12"><path d="M9 2H5Q2 2 2 6t3 4" fill="none" stroke="#2b7fb8" stroke-width="3"/><path d="M6 7h3v4" fill="none" stroke="#3aa0d8" stroke-width="1.500"/></svg><span>Create Offset Alignments</span><button aria-label="Close">${ic('thinClose',10)}</button></header>
<main>
<field-box><label slot="label" for="a">Alignment to offset from:</label><div class="sel"><select id="a"><option>Main Road</option></select>${ic('alignDot',12,'class="i"')}${chev}</div><button class="sq" style="margin-right:28px" aria-label="Pick alignment">${ic('pick',13)}</button></field-box>
<field-box class="tpl" tight><label slot="label" for="b">Offsets name template:</label><input class="long" type="text" id="b" value="&lt;[Parent Alignment Name(CP)]&gt;-&lt;[Side]&gt;-&lt;[Offset Distance"><button class="sq" aria-label="Edit template">${ic('nameTpl',13)}</button></field-box>
<fieldset><legend>Station range</legend><div class="range">
${check('From start')}${check('To end')}
<div class="st"><input type="text" disabled aria-label="Start station" value="0+000.00m"><button class="sq off" disabled aria-label="Pick start">${ic('pickOff',13)}</button></div>
<div class="st"><input type="text" disabled aria-label="End station" value="8+291.10m"><button class="sq off" disabled aria-label="Pick end">${ic('pickOff',13)}</button></div></div></fieldset>
<div class="two"><field-box tight><label slot="label" for="c">No. of offsets on left:</label><input type="text" id="c" value="3"></field-box><field-box tight><label slot="label" for="d">No. of offsets on right:</label><input type="text" id="d" value="3"></field-box></div>
<div class="two"><field-box tight><label slot="label" for="e">Incremental offset on left:</label><input type="text" id="e" value="4.000m"></field-box><field-box tight><label slot="label" for="f">Incremental offset on right:</label><input type="text" id="f" value="4.000m"></field-box></div>
<nav><button>General</button><button>Widening Criteria</button><button class="on">Create Offset Profile</button></nav>
<section class="page">
${check('Create profile for offset alignment')}
<field-box loose><label slot="label" for="g">Parent profile:</label><div class="sel"><select id="g"><option>DES</option></select>${ic('profile',12,'class="i"')}${chev}</div><button class="sq" aria-label="Pick profile">${ic('pick',13)}</button></field-box>
<field-box class="g8"><label slot="label" for="h">Superimpose onto profile view:</label><div class="sel light"><select id="h"><option>&lt;none&gt;</option></select>${chev}</div><button class="sq" aria-label="Pick view">${ic('pick',13)}</button></field-box>
<field-box class="g8" tight><label slot="label" for="i">Cross slope from parent profile:</label><input class="slope" type="text" id="i" value="-2.00%"></field-box>
<field-box class="g5"><label slot="label" for="j">Profile name:</label><input class="long" type="text" id="j" value="&lt;[Alignment Name(CP)]&gt; - &lt;[Alignment Offset(P3|RN|Sn|"><button class="sq" aria-label="Edit name">${ic('nameTpl',13)}</button></field-box>
<field-box class="g3"><label slot="label" for="k">Profile style:</label><div class="sel"><select id="k"><option>Existing Ground Profile</option></select>${ic('profEdit',12,'class="i"')}${chev}</div><button class="sq" aria-label="Edit style">${ic('brush+pencil',14)}</button><button class="sq dd" aria-label="Style menu"><svg width="8" height="6" viewBox="0 0 8 6"><path d="M0 1h8L4 5z" fill="#444"/></svg></button><button class="sq" aria-label="Style detail">${ic('brush+lens',14)}</button></field-box>
</section></main>
<footer><button class="def">OK</button><button>Cancel</button><button>Help</button></footer>
<svg class="grab" width="9" height="9" viewBox="0 0 9 9"><path d="M0 9L9 0M4 9l5-5" stroke="#999"/></svg>
<svg class="cursor" width="10" height="13" viewBox="0 0 10 13"><path d="M1 1v9l2-2 2 4 2-1-2-4h3z" fill="#fff" stroke="#222"/></svg>`);

define('brand-mark', `
:host{position:absolute;right:47px;bottom:12px;width:107px;height:107px;background:rgba(20,20,20,.66)}`,
`<svg width="107" height="107" viewBox="0 0 107 107" text-anchor="middle"><g fill="none" stroke="#355f9c" stroke-width="1.100"><circle cx="54" cy="39" r="19" stroke-width="1.500"/><path d="M35 58C23 52 20 40 24 22M72 58c12-6 15-18 11-36M20 29l8 16M34 21L27 42M18 46l13 8M87 29l-8 16M73 21l7 21M89 46l-13 8M27 60c18 6 36 6 54 0M29 56c16 8 34 8 50 0"/></g>
<text x="50" y="45" font-family="Liberation Sans, sans-serif" font-style="italic" font-weight="bold" font-size="23" fill="#6fe0d6">C</text><text x="60" y="57" font-family="Liberation Sans, sans-serif" font-size="6" fill="#9fc4cc">3d</text>
<text x="54" y="73" font-family="Liberation Serif, serif" font-weight="bold" font-size="9" fill="#55d6d6">CIVILCAT</text><text x="55" y="84" font-family="Liberation Serif, serif" font-style="italic" font-weight="bold" font-size="5" fill="#55d6d6">Mohammad Gaza</text></svg>`);

define('civil-app', `
:host{display:flex;flex-direction:column;height:100vh;position:relative;overflow:hidden}
.work{flex:1;display:flex;min-height:0}
.right{flex:1;display:flex;flex-direction:column;min-width:0;min-height:0}
.top{flex:1;display:flex;min-height:0}
drawing-view{flex:1}`,
`<title-bar></title-bar><menu-bar></menu-bar><ribbon-tabs></ribbon-tabs><app-ribbon></app-ribbon><doc-tabs></doc-tabs>
<div class="work"><tool-space></tool-space><side-tabs></side-tabs><div class="right"><div class="top"><drawing-view></drawing-view><icon-rail></icon-rail></div><command-line></command-line></div></div>
<layout-tabs></layout-tabs><status-bar></status-bar><task-bar></task-bar><offset-dialog></offset-dialog><brand-mark></brand-mark>`);
</script>
</body>
</html>
